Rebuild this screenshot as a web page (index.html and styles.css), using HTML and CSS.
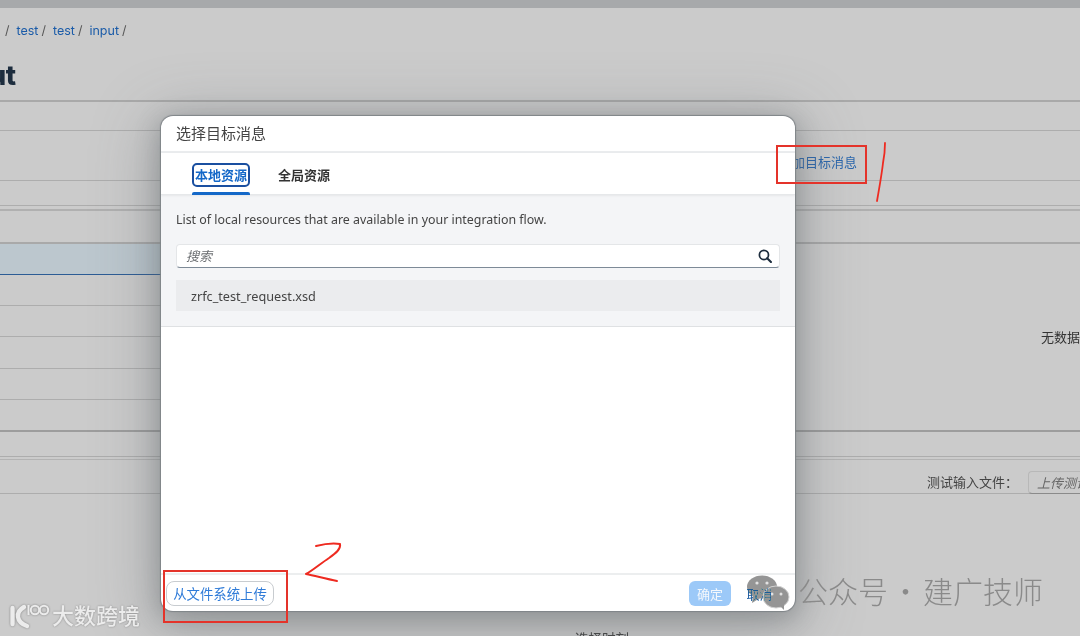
FILE: index.html
```html
<!DOCTYPE html>
<html lang="zh">
<head>
<meta charset="utf-8">
<title>选择目标消息</title>
<link rel="stylesheet" href="styles.css">
</head>
<body>
<div class="page">
  <div class="topbar"></div>
  <div class="crumbs"><span class="sep">/</span><a>test</a><span class="sep">/</span><a>test</a><span class="sep">/</span><a>input</a><span class="sep">/</span></div>
  <div class="title"><span>ut</span></div>
  <div class="row r29"></div>
  <div class="row r50 action"><a>添加目标消息</a></div>
  <div class="row r25"></div>
  <div class="row r5"></div>
  <div class="row r33"></div>
  <div class="split">
    <div class="list">
      <div class="row r31 selected"></div>
      <div class="row r31"></div>
      <div class="row r31"></div>
      <div class="row r32"></div>
      <div class="row r31"></div>
    </div>
    <div class="detail"><span>无数据</span></div>
  </div>
  <div class="row r25"></div>
  <div class="row r3"></div>
  <div class="fileinput"><span>测试输入文件：</span><div class="upload">上传测试</div></div>
  <div class="bottomtext">选择时刻</div>
</div>

<section class="dialog">
  <header class="dialog-head">选择目标消息</header>
  <nav class="tabs">
    <div class="tab active"><span>本地资源</span></div>
    <div class="tab"><span>全局资源</span></div>
  </nav>
  <div class="panel">
    <p class="hint">List of local resources that are available in your integration flow.</p>
    <div class="search">
      <span>搜索</span>
      <svg width="14" height="14" viewBox="0 0 16 16"><circle cx="6.8" cy="6.8" r="5.2" fill="none" stroke="#1d2d3e" stroke-width="2"/><path d="M10.5 10.5L14.8 14.8" stroke="#1d2d3e" stroke-width="2.4" stroke-linecap="round"/></svg>
    </div>
    <div class="item">zrfc_test_request.xsd</div>
  </div>
  <div class="dialog-body"></div>
  <footer class="dialog-foot">
    <button class="upload-btn">从文件系统上传</button>
    <button class="ok">确定</button>
    <button class="cancel">取消</button>
  </footer>
</section>

<div class="mark-box box-a"></div>
<div class="mark-box box-b"></div>
<svg class="scribble" width="1080" height="636" viewBox="0 0 1080 636">
  <path d="M885 143C885 152 884 158 883 163C882 172 880 184 877 201" fill="none" stroke="#ee2a20" stroke-width="1.8" stroke-linecap="round"/>
  <path d="M316 546C324 544 334 543 340 544C341 549 336 553 329 558C320 564 312 571 306 574C316 576 326 579 337 581" fill="none" stroke="#ee2a20" stroke-width="2" stroke-linecap="round" stroke-linejoin="round"/>
</svg>

<svg class="wechat" width="44" height="36" viewBox="0 0 44 36">
  <ellipse cx="15" cy="12" rx="15" ry="11.5" fill="#959595"/>
  <path d="M6 20L5 28L13 23Z" fill="#959595"/>
  <ellipse cx="29" cy="22" rx="13" ry="11" fill="#959595" stroke="#d2d2d2" stroke-width="1"/>
  <path d="M33 31L37 35L37 29Z" fill="#959595"/>
  <circle cx="10" cy="8" r="1.6" fill="#e2e2e2"/><circle cx="20" cy="8" r="1.6" fill="#e2e2e2"/>
  <circle cx="25" cy="19" r="1.5" fill="#e2e2e2"/><circle cx="34" cy="19" r="1.5" fill="#e2e2e2"/>
</svg>
<div class="wm-right"><span>公众号</span><span class="dot">·</span><span>建广技师</span></div>
<div class="wm-left">
  <svg class="wm-logo" width="43" height="30" viewBox="0 0 43 30"><path d="M3.5 7V23" fill="none" stroke="#ececec" stroke-width="4.4" stroke-linecap="round"/><path d="M15 6C6 11 7 21 18 25" fill="none" stroke="#ececec" stroke-width="4.4" stroke-linecap="round"/><path d="M19.5 4V14" stroke="#ececec" stroke-width="2"/><circle cx="26" cy="9" r="4.2" fill="none" stroke="#ececec" stroke-width="2"/><circle cx="35" cy="9" r="4.2" fill="none" stroke="#ececec" stroke-width="2"/></svg>
  <span>大数跨境</span>
</div>
</body>
</html>
```
FILE: styles.css
```css
* { box-sizing: border-box; }
html, body { margin: 0; height: 100%; overflow: hidden; }
body { position: relative; width: 1080px; height: 636px; background: #cbcbcb; font-family: Inter, "Noto Sans CJK SC", sans-serif; }
a { color: #1a5ba8; text-decoration: none; }

.page { height: 636px; overflow: hidden; color: #333; }
.topbar { height: 8px; background: #a7a9ab; }
.crumbs { height: 44px; padding: 15px 0 0 5px; display: flex; align-items: flex-start; font-size: 12.5px; line-height: 16px; color: #555; }
.crumbs a { margin-right: 3px; }
.crumbs .sep { margin-right: 7px; }
.title { height: 50px; padding-top: 6px; font-size: 27px; line-height: 36px; font-weight: 800; color: #1d2d3e; letter-spacing: -.5px; border-bottom: 2px solid #a9a9a9; overflow: hidden; }
.title span { display: block; margin-left: -11px; }

.row { border-bottom: 1px solid #adadad; }
.r29 { height: 29px; }
.r50 { height: 50px; }
.r25 { height: 25px; }
.r5 { height: 5px; border-bottom-width: 2px; border-bottom-color: #b0b0b0; }
.r33 { height: 33px; border-bottom-width: 2px; border-bottom-color: #a9a9a9; }
.r31 { height: 31px; }
.r32 { height: 32px; }
.r3 { height: 3px; border-bottom-color: #b3b3b3; }
.selected { background: #bcc7ce; border-bottom: 1px solid #2c5c95; }
.action { display: flex; justify-content: flex-end; align-items: flex-start; padding: 22px 223px 0 0; font-size: 13px; line-height: 18px; }
.action a { color: #2b67ad; }

.split { height: 188px; display: flex; justify-content: space-between; border-bottom: 2px solid #9d9d9d; }
.list { width: 500px; }
.detail { width: 39px; padding-top: 84px; font-size: 13px; line-height: 18px; color: #333; white-space: nowrap; overflow: hidden; }

.fileinput { height: 34px; display: flex; justify-content: flex-end; align-items: flex-start; gap: 10px; padding-top: 11px; font-size: 13px; line-height: 22px; color: #444; white-space: nowrap; border-bottom: 1px solid #adadad; }
.upload { width: 52px; height: 23px; padding-left: 8px; overflow: hidden; border: 1px solid #b8b8b8; border-bottom-color: #8a8a8a; border-right: 0; border-radius: 4px 0 0 4px; font-style: italic; color: #666; }
.bottomtext { padding: 137px 0 0 575px; font-size: 13.5px; line-height: 16px; color: #444; }

.dialog { position: absolute; left: 161px; top: 116px; width: 634px; height: 495px; display: flex; flex-direction: column; overflow: hidden; background: #fff; border-radius: 12px; box-shadow: 0 0 1px 1px #7f8488, 0 6px 22px 4px rgba(90,95,100,.3), 0 10px 60px 8px rgba(90,95,100,.35); }
.dialog-head { height: 37px; padding-left: 15px; font-size: 15px; line-height: 36px; color: #444; border-bottom: 2px solid #eaecee; }
.tabs { height: 42px; display: flex; padding-left: 31px; gap: 28px; border-bottom: 1px solid #e6e8ea; box-shadow: 0 1px 2px rgba(0,0,0,.06); position: relative; }
.tab { position: relative; width: 58px; padding-top: 10px; font-size: 13px; font-weight: 600; color: #333; text-align: left; white-space: nowrap; }
.tab span { display: block; height: 24px; line-height: 24px; }
.tab.active span { color: #1468c8; border: 2px solid #1a4fa0; border-radius: 5px; line-height: 21px; text-align: center; }
.tab.active::after { content: ""; position: absolute; left: 0; right: 0; bottom: -1px; height: 3px; background: #1468c8; border-radius: 2px 2px 0 0; }
.panel { height: 132px; padding: 17px 15px 0; background: #f4f5f7; border-bottom: 1px solid #dfe1e3; }
.hint { margin: 0 0 16px; font-size: 12.4px; line-height: 16px; color: #444; font-family: "Noto Sans", sans-serif; }
.search { height: 24px; display: flex; align-items: center; justify-content: space-between; padding: 0 0 1px 9px; background: #fff; border: 1px solid #e4e6e8; border-bottom: 1px solid #7d8a97; border-radius: 4px; font-size: 13px; font-style: italic; color: #6a6d70; }
.search svg { margin-right: 7px; }
.item { height: 31px; margin-top: 12px; padding-left: 15px; font-size: 12.7px; line-height: 33px; color: #444; background: #ebecee; font-family: "Noto Sans", sans-serif; }
.dialog-body { flex: 1; }
.dialog-foot { height: 38px; display: flex; align-items: center; padding: 0 22px 0 5px; border-top: 2px solid #eceeef; }
.dialog-foot button { font: inherit; font-size: 13px; background: none; padding: 0; white-space: nowrap; }
.dialog-foot .upload-btn { width: 108px; height: 25px; color: #2f7bd8; border: 1px solid #c8ccd0; border-radius: 8px; font-size: 13.4px; }
.dialog-foot .ok { margin-left: auto; width: 42px; height: 25px; border: 0; border-radius: 6px; background: #9cc9f8; color: #f4f8fc; }
.dialog-foot .cancel { width: 27px; margin-left: 15px; height: 25px; border: 0; color: #1b5aa0; }

.mark-box { position: absolute; border: 2px solid #e4332a; }
.box-a { left: 776px; top: 145px; width: 91px; height: 39px; }
.box-b { left: 163px; top: 570px; width: 125px; height: 53px; }
.scribble { position: absolute; left: 0; top: 0; pointer-events: none; }

.wechat { position: absolute; left: 747px; top: 575px; mix-blend-mode: darken; }
.wm-right { position: absolute; left: 798px; top: 568px; display: flex; color: #8a8a8a; font-size: 30px; line-height: 44px; white-space: nowrap; font-family: "Noto Sans CJK SC", sans-serif; font-weight: 300; }
.wm-right .dot { width: 35px; text-align: center; }
.wm-left { position: absolute; left: 9px; top: 601px; display: flex; align-items: center; color: #ececec; font-size: 22px; line-height: 26px; white-space: nowrap; font-family: "Noto Sans CJK SC", sans-serif; font-weight: 500; text-shadow: 0 0 2px #808080; }
.wm-left span { padding-bottom: 4px; }
.wm-logo { filter: drop-shadow(0 0 1px #808080); }
```
